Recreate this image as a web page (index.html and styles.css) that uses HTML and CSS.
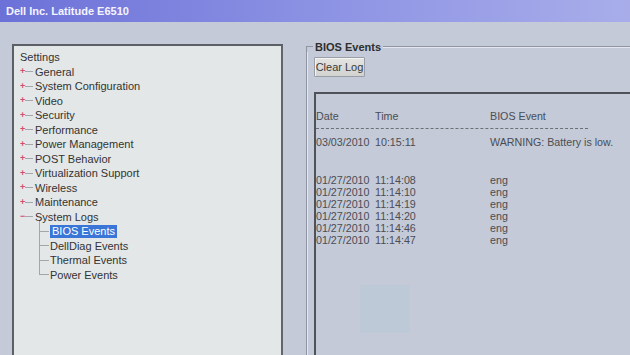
FILE: index.html
```html
<!DOCTYPE html>
<html>
<head>
    <title>Dell Inc. Latitude E6510</title>
    <link rel="stylesheet" href="styles.css">
</head>
<body>
    <div class="titlebar">Dell Inc. Latitude E6510</div>
    <div class="main">
        <div class="tree-panel">
            <div class="tree-root">Settings</div>
            <ul class="tree">
                <li class="node"><span class="expander">+</span><span class="branch"></span><span class="label">General</span></li>
                <li class="node"><span class="expander">+</span><span class="branch"></span><span class="label">System Configuration</span></li>
                <li class="node"><span class="expander">+</span><span class="branch"></span><span class="label">Video</span></li>
                <li class="node"><span class="expander">+</span><span class="branch"></span><span class="label">Security</span></li>
                <li class="node"><span class="expander">+</span><span class="branch"></span><span class="label">Performance</span></li>
                <li class="node"><span class="expander">+</span><span class="branch"></span><span class="label">Power Management</span></li>
                <li class="node"><span class="expander">+</span><span class="branch"></span><span class="label">POST Behavior</span></li>
                <li class="node"><span class="expander">+</span><span class="branch"></span><span class="label">Virtualization Support</span></li>
                <li class="node"><span class="expander">+</span><span class="branch"></span><span class="label">Wireless</span></li>
                <li class="node"><span class="expander">+</span><span class="branch"></span><span class="label">Maintenance</span></li>
                <li class="node open"><span class="expander">&minus;</span><span class="branch"></span><span class="label">System Logs</span></li>
            </ul>
            <ul class="subtree">
                <li class="leaf"><span class="branch"></span><span class="label selected">BIOS Events</span></li>
                <li class="leaf"><span class="branch"></span><span class="label">DellDiag Events</span></li>
                <li class="leaf"><span class="branch"></span><span class="label">Thermal Events</span></li>
                <li class="leaf"><span class="branch"></span><span class="label">Power Events</span></li>
            </ul>
        </div>

        <div class="events">
            <div class="events-title">BIOS Events</div>
            <div class="events-body">
                <button class="clear-button">Clear Log</button>
                <div class="log-box">
                    <div class="log-row log-head">
                        <span class="col-date">Date</span>
                        <span class="col-time">Time</span>
                        <span class="col-event">BIOS Event</span>
                    </div>
                    <div class="log-rule"></div>
                    <div class="log-row">
                        <span class="col-date">03/03/2010</span>
                        <span class="col-time">10:15:11</span>
                        <span class="col-event">WARNING: Battery is low.</span>
                    </div>
                    <div class="log-group">
                        <div class="log-row"><span class="col-date">01/27/2010</span><span class="col-time">11:14:08</span><span class="col-event">eng</span></div>
                        <div class="log-row"><span class="col-date">01/27/2010</span><span class="col-time">11:14:10</span><span class="col-event">eng</span></div>
                        <div class="log-row"><span class="col-date">01/27/2010</span><span class="col-time">11:14:19</span><span class="col-event">eng</span></div>
                        <div class="log-row"><span class="col-date">01/27/2010</span><span class="col-time">11:14:20</span><span class="col-event">eng</span></div>
                        <div class="log-row"><span class="col-date">01/27/2010</span><span class="col-time">11:14:46</span><span class="col-event">eng</span></div>
                        <div class="log-row"><span class="col-date">01/27/2010</span><span class="col-time">11:14:47</span><span class="col-event">eng</span></div>
                    </div>
                    <div class="glare"></div>
                </div>
            </div>
        </div>
    </div>
</body>
</html>
```

FILE: styles.css
```css
* {
    margin: 0;
    padding: 0;
    box-sizing: border-box;
}

html, body {
    height: 100%;
    overflow: hidden;
}

body {
    background: #c4cad7;
    font-family: "Liberation Sans", Arial, sans-serif;
    font-size: 11px;
    color: #3a3a3a;
    display: flex;
    flex-direction: column;
}

.titlebar {
    height: 22px;
    flex-shrink: 0;
    padding: 5px 0 0 6px;
    background: linear-gradient(to right, #6c71d8, #8f95e4 55%, #a8adea);
    color: #f4f4ff;
    font-weight: bold;
    font-size: 11px;
}

.main {
    flex: 1;
    display: flex;
    gap: 23px;
    padding: 22px 0 0 12px;
    overflow: hidden;
}

/* arbol de la izquierda */
.tree-panel {
    width: 271px;
    flex-shrink: 0;
    background: #e3e7e7;
    border-top: 2px solid #5c5f66;
    border-left: 2px solid #5c5f66;
    border-right: 2px solid #62656b;
    padding: 4px 0 0 6px;
    line-height: 14.5px;
}

.tree-root {
    color: #333;
}

.tree, .subtree {
    list-style: none;
}

.node {
    display: flex;
    align-items: center;
    height: 14.5px;
}

.expander {
    width: 5px;
    font-size: 9px;
    font-weight: bold;
    color: #d24c6c;
    text-align: center;
    line-height: 9px;
}

.node .branch {
    width: 8px;
    margin: 0 2px 0 0;
    border-top: 1px solid #a4a6a8;
}

.label {
    color: #333;
    white-space: nowrap;
}

.subtree {
    margin-left: 19px;
    margin-top: -4px;
    padding-top: 4px;
    border-left: 1px solid #a4a6a8;
    height: 55px;
}

.leaf {
    display: flex;
    align-items: center;
    height: 14.5px;
}

.leaf .branch {
    width: 9px;
    margin-right: 1px;
    border-top: 1px solid #a4a6a8;
}

.label.selected {
    background: #3a76d8;
    color: #fff;
    padding: 0 2px;
    line-height: 13px;
}

/* panel de eventos */
.events {
    flex: 1;
    display: flex;
    flex-direction: column;
    min-width: 0;
}

.events-title {
    display: flex;
    align-items: center;
    gap: 2px;
    height: 11px;
    margin-top: -3px;
    font-weight: bold;
    color: #2e2e2e;
}

.events-title::before {
    content: "";
    width: 6px;
    height: 6px;
    margin-bottom: -6px;
    border-top: 1px solid #8f95a3;
    border-left: 1px solid #8f95a3;
}

.events-title::after {
    content: "";
    flex: 1;
    border-top: 1px solid #8f95a3;
    box-shadow: 0 1px 0 #e4e7ee;
}

.events-body {
    flex: 1;
    display: flex;
    flex-direction: column;
    border-left: 1px solid #8f95a3;
    box-shadow: inset 1px 0 0 #e4e7ee;
    padding: 5px 0 0 7px;
}

.clear-button {
    width: 51px;
    height: 20px;
    font-family: "Liberation Sans", Arial, sans-serif;
    font-size: 11px;
    color: #3a3a3a;
    background: linear-gradient(#e4e4e2, #d2d3d0);
    border: 1px solid #9a9ea6;
    border-radius: 1px;
    box-shadow: inset 1px 1px 0 #f4f4f4;
}

.log-box {
    flex: 1;
    position: relative;
    margin-top: 15px;
    border-top: 2px solid #4f5259;
    border-left: 2px solid #4f5259;
    padding: 16px 0 0 0;
    font-size: 10.7px;
    color: #4a4d55;
}

.log-row {
    display: flex;
    height: 12px;
    line-height: 12px;
}

.col-date {
    width: 59px;
}

.col-time {
    width: 115px;
}

.log-head {
    margin-bottom: 6px;
}

.log-rule {
    width: 272px;
    border-top: 1px dashed #6c6f76;
    margin-bottom: 7px;
}

.log-group {
    margin-top: 26px;
}

/* reflejo de la pantalla */
.glare {
    position: absolute;
    left: 44px;
    top: 191px;
    width: 50px;
    height: 48px;
    background: rgba(175, 202, 216, 0.28);
}
```
